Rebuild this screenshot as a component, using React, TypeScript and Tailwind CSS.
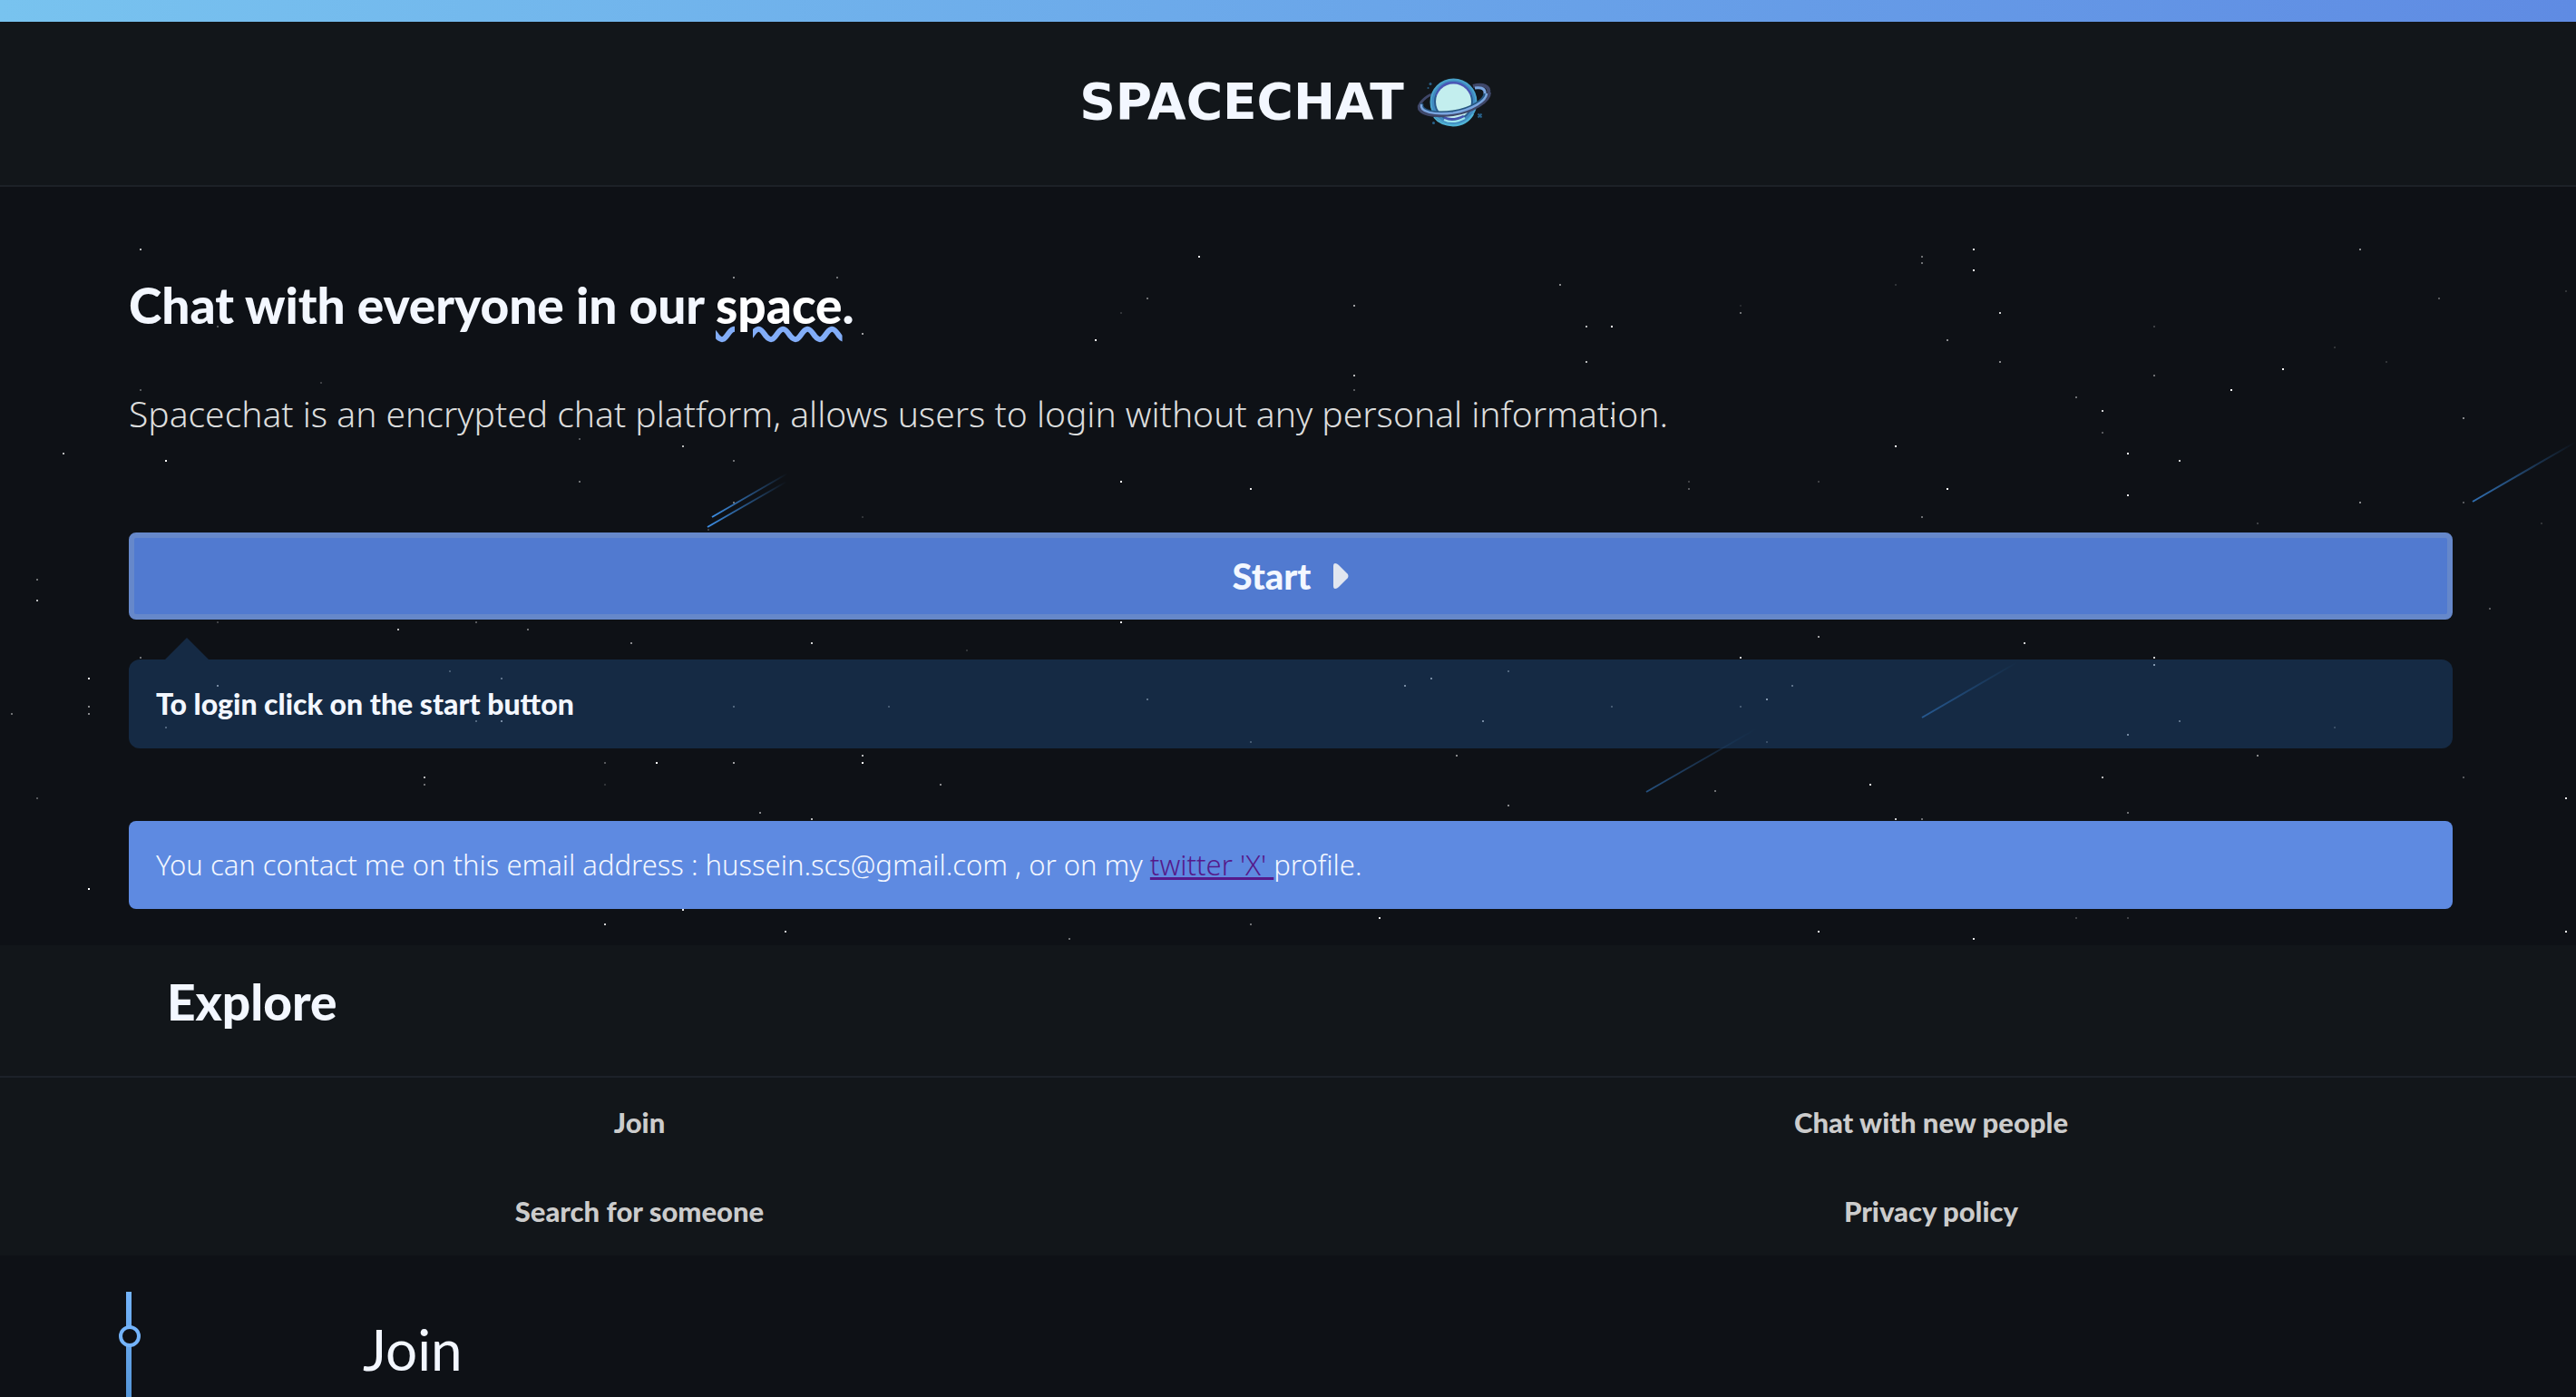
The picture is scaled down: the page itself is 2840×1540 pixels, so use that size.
const stars: [number, number, number][] = [
  [155, 69, 0.7], [1322, 77, 0.9], [809, 100, 0.5], [923, 100, 0.4], [1265, 123, 0.4], [1236, 139, 0.15],
  [240, 154, 0.3], [951, 162, 0.6], [1208, 169, 1], [354, 216, 0.2], [155, 224, 0.3], [639, 278, 0.3],
  [753, 286, 0.7], [70, 294, 0.7], [183, 302, 1], [809, 302, 0.4], [639, 325, 0.4], [1236, 325, 1],
  [1379, 333, 0.9], [809, 348, 0.4], [951, 364, 0.15], [781, 378, 0.2], [41, 433, 0.4], [41, 456, 0.7],
  [240, 480, 0.2], [525, 480, 0.3], [1236, 480, 0.9], [439, 488, 0.7], [582, 488, 0.4], [696, 503, 0.5],
  [895, 503, 0.8], [1066, 511, 0.15], [155, 519, 0.4], [98, 542, 0.9], [553, 542, 0.6], [496, 534, 0.4],
  [240, 550, 0.8], [98, 573, 0.5], [809, 573, 0.5], [980, 573, 0.4], [13, 581, 0.4], [98, 581, 0.5],
  [1265, 565, 0.6], [553, 589, 0.8], [525, 589, 0.5], [183, 596, 0.5], [1379, 612, 0.4], [951, 627, 0.7],
  [951, 635, 1], [809, 635, 0.6], [724, 635, 1], [667, 635, 0.3], [468, 651, 0.7], [468, 659, 0.4],
  [667, 659, 0.15], [1037, 659, 0.5], [41, 674, 0.3], [838, 690, 0.5], [895, 697, 0.7], [98, 774, 1],
  [753, 797, 0.9], [667, 813, 0.8], [1379, 813, 0.4], [866, 821, 0.8], [1179, 829, 0.4],
  [1493, 131, 0.6], [1720, 108, 0.5], [1749, 154, 0.7], [1777, 154, 1], [1749, 193, 0.7], [1493, 208, 0.7],
  [1493, 224, 0.3], [1919, 131, 0.1], [1919, 139, 0.4], [2090, 108, 0.15], [2119, 77, 0.4], [2119, 84, 0.4],
  [2176, 69, 0.9], [2176, 92, 1], [2147, 169, 0.5], [2205, 139, 0.8], [2205, 193, 0.5], [2375, 154, 0.2],
  [2375, 208, 0.4], [2602, 69, 0.5], [2689, 123, 0.3], [2829, 115, 0.15], [2574, 177, 0.15], [2631, 193, 0.15],
  [2517, 201, 1], [2460, 224, 1], [2289, 232, 0.4], [2318, 247, 0.8], [1777, 255, 1], [2716, 255, 0.5],
  [2318, 271, 0.3], [2346, 294, 1], [2090, 286, 1], [2403, 302, 0.8], [1862, 325, 0.2], [1862, 333, 0.3],
  [2005, 325, 0.2], [2147, 333, 1], [2346, 340, 0.9], [2602, 348, 0.5], [2716, 348, 0.3], [2119, 364, 0.4],
  [2489, 371, 0.2], [2802, 371, 0.15], [2745, 465, 0.3], [2005, 496, 0.6], [2232, 503, 0.8], [1919, 519, 0.8],
  [2375, 519, 0.8], [2375, 527, 0.9], [1578, 542, 0.8], [1549, 550, 0.8], [1663, 534, 0.5], [1976, 550, 0.6],
  [1948, 565, 0.9], [1777, 573, 0.4], [1919, 573, 0.4], [1635, 589, 0.8], [2403, 589, 0.6], [2346, 604, 0.8],
  [2574, 596, 0.3], [1948, 612, 0.3], [1606, 627, 0.5], [2489, 627, 0.5], [2318, 651, 0.7], [2716, 651, 0.3],
  [2062, 659, 0.9], [1891, 666, 0.4], [2829, 674, 0.9], [1663, 682, 0.5], [2346, 690, 0.4], [2090, 697, 0.8],
  [2119, 697, 0.4], [1521, 806, 0.9], [2289, 806, 0.2], [2346, 806, 0.2], [2005, 821, 0.9], [2176, 829, 0.9],
  [2829, 821, 1],
];

const meteors = [
  { x1: 785, y1: 364, x2: 868, y2: 316, opacity: 1 },
  { x1: 780, y1: 375, x2: 867, y2: 325, opacity: 1 },
  { x1: 2726, y1: 347, x2: 2840, y2: 281, opacity: 0.75 },
  { x1: 2119, y1: 585, x2: 2224, y2: 524, opacity: 0.75 },
  { x1: 1815, y1: 667, x2: 1937, y2: 597, opacity: 0.5 },
];

const links = ["Join", "Chat with new people", "Search for someone", "Privacy policy"];

function Sky() {
  return (
    <svg className="pointer-events-none absolute top-0 left-0 h-[836px] w-[2840px]" viewBox="0 0 2840 836" aria-hidden="true">
      <defs>
        {meteors.map((m, i) => (
          <linearGradient key={i} id={`trail${i}`} gradientUnits="userSpaceOnUse" x1={m.x1} y1={m.y1} x2={m.x2} y2={m.y2}>
            <stop offset="0" stopColor="#3d8fe6" />
            <stop offset="1" stopColor="#3d8fe6" stopOpacity="0" />
          </linearGradient>
        ))}
      </defs>
      {stars.map(([x, y, o]) => (
        <rect key={`${x}-${y}`} x={x - 1} y={y - 1} width="2" height="2" fill="#fff" opacity={o} />
      ))}
      {meteors.map((m, i) => (
        <line key={i} x1={m.x1} y1={m.y1} x2={m.x2} y2={m.y2} stroke={`url(#trail${i})`} strokeWidth="2" opacity={m.opacity} />
      ))}
    </svg>
  );
}

function Planet() {
  return (
    <svg className="h-16 w-[94px]" viewBox="0 0 94 64" fill="none" aria-hidden="true">
      <path d="M22 24C12 29 7 36 9 41" stroke="#3f4769" strokeWidth="3" />
      <path d="M68 15C79 12 87 15 85 23" stroke="#3f4769" strokeWidth="4" />
      <path d="M70 17C78 16 82 18 81 24" stroke="#7aa6e0" strokeWidth="3" />
      <circle cx="46.500" cy="32.500" r="25" fill="#4089c0" />
      <circle cx="46.500" cy="32.500" r="25" stroke="#4aa3cc" strokeWidth="2" />
      <circle cx="46.500" cy="32" r="21.500" fill="#2b5c8e" />
      <path d="M28 26C31 15 39 11 47 11.500C56 12 63 18 65 25" stroke="#4a55b5" strokeWidth="3" />
      <circle cx="46.500" cy="32" r="19.500" fill="#c3eeee" />
      <path d="M36 50Q46 54 58 48" stroke="#4553ae" strokeWidth="3" />
      <path d="M36 52Q46 57 59 50" stroke="#9ee6ee" strokeWidth="2" />
      <path d="M25 49Q32 58 46 58.500Q61 58 68 46" stroke="#51b4d6" strokeWidth="2" />
      <path d="M9 36C7 46 24 49 46 46C67 43 86 32 86 22" stroke="#3f4769" strokeWidth="4" />
      <path d="M12 34C9 42 26 46 46 43C66 40 81 30 81 23" stroke="#24557f" strokeWidth="3" />
      <path d="M11 35C9 43.500 25 47 46 44.500C66 41.500 83 31 83 23" stroke="#7aa6e0" strokeWidth="2.500" />
      <circle cx="21" cy="12.500" r="1.500" fill="#28618a" />
      <circle cx="18.500" cy="17" r="1" fill="#28618a" />
      <circle cx="24.500" cy="55.500" r="1.500" fill="#28618a" />
      <path d="M73.500 45.500L77.500 49.500M77.500 45.500L73.500 49.500" stroke="#28618a" strokeWidth="2" />
    </svg>
  );
}

export default function App() {
  return (
    <div className="flex min-h-screen flex-col overflow-x-hidden bg-[#0e1116] font-['Lato',sans-serif] text-[#f3f7ff]">
      <div className="h-6 bg-linear-to-r from-[#78c3ef] to-[#5f8be3]" />
      <header className="flex justify-center border-b-2 border-[#1c2127] bg-[#12161a] pt-14 pb-[60px]">
        <div className="flex items-center gap-2">
          <h1 className="font-['DejaVu_Sans',sans-serif] text-[55px] leading-16 font-bold">SPACECHAT</h1>
          <Planet />
        </div>
      </header>

      <main className="relative overflow-hidden pt-22 pr-[136px] pb-10 pl-[5%]">
        <Sky />
        <div className="relative">
          <h2 className="text-[55px] leading-[84px] font-black">
            Chat with everyone in our{" "}
            <span className="text-white underline decoration-[#82adf8] decoration-wavy decoration-[6px] underline-offset-4">space</span>.
          </h2>
          <p className="mt-12 font-['Noto_Sans',sans-serif] text-[39px] leading-[60px] font-[350] text-[#dcdddd]">
            Spacechat is an encrypted chat platform, allows users to login without any personal information.
          </p>
          <button
            type="button"
            className="mt-[101px] flex h-24 w-full items-center justify-center gap-6 rounded-lg border-6 border-[#6688ca] bg-[#517ad0] text-[40px] font-black"
          >
            Start
            <svg className="h-7 w-[18px]" viewBox="0 0 18 28" aria-hidden="true">
              <path d="M1 3Q1 0 3 0Q5 0 7 2L17 12Q18 14 17 16L7 26Q5 28 3 28Q1 28 1 25Z" fill="#e1e6f0" />
            </svg>
          </button>
          <div className="relative mt-11 flex h-[98px] items-center rounded-xl bg-[#1c4372]/50 px-[30px]">
            <svg className="absolute bottom-full left-10 h-6 w-12" viewBox="0 0 48 24" aria-hidden="true">
              <path d="M0 24L24 0L48 24Z" fill="#152a44" />
            </svg>
            <p className="text-[32px] font-black">To login click on the start button</p>
          </div>
          <p className="mt-20 flex h-[97px] items-center rounded-lg bg-[#5e8ae1] px-[30px] font-['Noto_Sans',sans-serif] text-[31px] font-[350]">
            <span>
              You can contact me on this email address : hussein.scs@gmail.com , or on my{" "}
              <a href="#twitter" className="text-[#551a8b] underline decoration-3">twitter 'X' </a>
              profile.
            </span>
          </p>
        </div>
      </main>

      <section className="bg-[#12161a]">
        <h2 className="border-b-2 border-[#1c2129] pt-5 pb-10 pl-[184px] text-[55px] leading-[84px] font-black">Explore</h2>
        <nav className="grid grid-cols-[1410fr_1422fr] gap-x-2">
          {links.map((l) => (
            <a key={l} href="#section" className="flex h-[98px] items-center justify-center text-[31px] font-black text-[#cccccc]">
              {l}
            </a>
          ))}
        </nav>
      </section>

      <section className="flex-1 pt-10 pl-[139px]">
        <div className="flex">
          <div className="relative w-1.5 bg-linear-to-b from-[#74b4fb] to-[#5596d8]">
            <span className="absolute top-[37px] -left-2 size-6 rounded-full border-4 border-[#74b4fb] bg-[#0e1116]" />
          </div>
          <h3 className="pt-[23px] pb-[13px] pl-[255px] text-[62px] leading-20">Join</h3>
        </div>
      </section>
    </div>
  );
}
